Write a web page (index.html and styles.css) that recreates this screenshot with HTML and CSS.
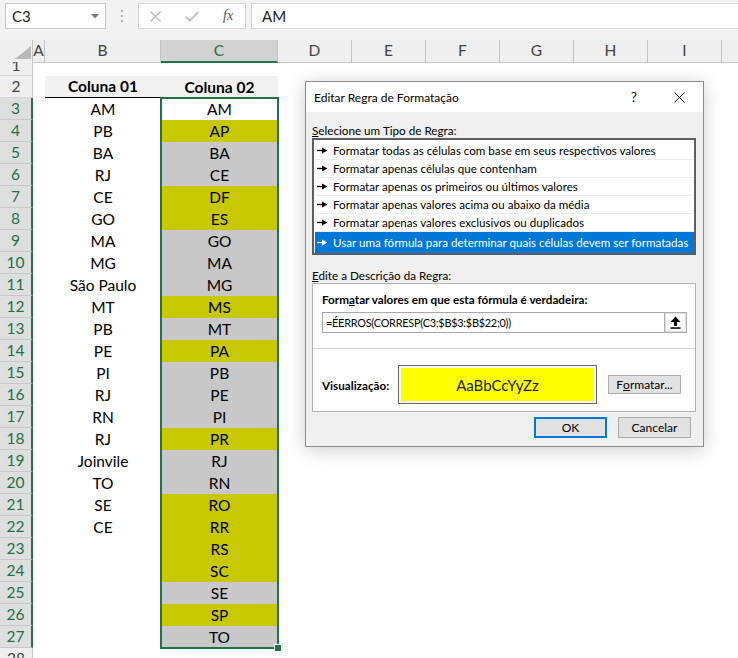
FILE: index.html
```html
<!DOCTYPE html>
<html lang="pt-BR">
<head>
<meta charset="utf-8">
<title>Editar Regra de Formatação</title>
<link rel="stylesheet" href="styles.css">
</head>
<body>
<div class="top">
  <div class="namebox"><span>C3</span><svg class="caret" width="8" height="5" viewBox="0 0 8 5"><polygon points="0,0 8,0 4,4.5" fill="#7a7a7a"/></svg></div>
  <div class="dots"><i></i><i></i><i></i></div>
  <div class="fxbox">
    <svg class="ic-x" width="11" height="11" viewBox="0 0 11 11"><path d="M0.5 0.5 L10.5 10.5 M10.5 0.5 L0.5 10.5" stroke="#b8b8b8" stroke-width="1.2" fill="none"/></svg>
    <svg class="ic-ok" width="14" height="11" viewBox="0 0 14 11"><path d="M0.8 5.6 L4.8 9.6 L13.2 1" stroke="#b8b8b8" stroke-width="1.6" fill="none"/></svg>
    <span class="fx">fx</span>
  </div>
  <div class="finput">AM</div>
</div>

<div class="sheet">
  <div class="hdr">
    <div class="corner"><svg width="33" height="22" viewBox="0 0 33 22"><polygon points="15,19 31,19 31,6" fill="#b9b9b9"/></svg></div>
    <div class="ch">A</div><div class="ch">B</div><div class="ch sel">C</div><div class="ch">D</div><div class="ch">E</div><div class="ch">F</div><div class="ch">G</div><div class="ch">H</div><div class="ch">I</div><div class="ch last"></div>
  </div>
  <div class="row r1"><div class="rh"><span>1</span></div></div>
  <div class="row"><div class="rh">2</div><div></div><div class="c hd bl">Coluna 01</div><div class="c hd">Coluna 02</div></div>
  <div class="row"><div class="rh s">3</div><div></div><div class="c">AM</div><div class="c">AM</div></div>
  <div class="row"><div class="rh s">4</div><div></div><div class="c">PB</div><div class="c y">AP</div></div>
  <div class="row"><div class="rh s">5</div><div></div><div class="c">BA</div><div class="c g">BA</div></div>
  <div class="row"><div class="rh s">6</div><div></div><div class="c">RJ</div><div class="c g">CE</div></div>
  <div class="row"><div class="rh s">7</div><div></div><div class="c">CE</div><div class="c y">DF</div></div>
  <div class="row"><div class="rh s">8</div><div></div><div class="c">GO</div><div class="c y">ES</div></div>
  <div class="row"><div class="rh s">9</div><div></div><div class="c">MA</div><div class="c g">GO</div></div>
  <div class="row"><div class="rh s">10</div><div></div><div class="c">MG</div><div class="c g">MA</div></div>
  <div class="row"><div class="rh s">11</div><div></div><div class="c">São Paulo</div><div class="c g">MG</div></div>
  <div class="row"><div class="rh s">12</div><div></div><div class="c">MT</div><div class="c y">MS</div></div>
  <div class="row"><div class="rh s">13</div><div></div><div class="c">PB</div><div class="c g">MT</div></div>
  <div class="row"><div class="rh s">14</div><div></div><div class="c">PE</div><div class="c y">PA</div></div>
  <div class="row"><div class="rh s">15</div><div></div><div class="c">PI</div><div class="c g">PB</div></div>
  <div class="row"><div class="rh s">16</div><div></div><div class="c">RJ</div><div class="c g">PE</div></div>
  <div class="row"><div class="rh s">17</div><div></div><div class="c">RN</div><div class="c g">PI</div></div>
  <div class="row"><div class="rh s">18</div><div></div><div class="c">RJ</div><div class="c y">PR</div></div>
  <div class="row"><div class="rh s">19</div><div></div><div class="c">Joinvile</div><div class="c g">RJ</div></div>
  <div class="row"><div class="rh s">20</div><div></div><div class="c">TO</div><div class="c g">RN</div></div>
  <div class="row"><div class="rh s">21</div><div></div><div class="c">SE</div><div class="c y">RO</div></div>
  <div class="row"><div class="rh s">22</div><div></div><div class="c">CE</div><div class="c y">RR</div></div>
  <div class="row"><div class="rh s">23</div><div></div><div class="c"></div><div class="c y">RS</div></div>
  <div class="row"><div class="rh s">24</div><div></div><div class="c"></div><div class="c y">SC</div></div>
  <div class="row"><div class="rh s">25</div><div></div><div class="c"></div><div class="c g">SE</div></div>
  <div class="row"><div class="rh s">26</div><div></div><div class="c"></div><div class="c y">SP</div></div>
  <div class="row"><div class="rh s">27</div><div></div><div class="c"></div><div class="c g">TO</div></div>
  <div class="row r28"><div class="rh">28</div><div></div><div class="c"></div><div class="c"></div></div>
</div>

<div class="selbox"><div class="handle"></div></div>

<div class="dialog">
  <div class="dtitle">
    <span class="dt-text">Editar Regra de Formatação</span>
    <span class="dq">?</span>
    <svg class="dx" width="11" height="11" viewBox="0 0 11 11"><path d="M0.5 0.5 L10.5 10.5 M10.5 0.5 L0.5 10.5" stroke="#111" stroke-width="1" fill="none"/></svg>
  </div>
  <div class="dbody">
    <div class="lbl"><u>S</u>elecione um Tipo de Regra:</div>
    <ul class="rules">
      <li><svg class="arr" width="11" height="7" viewBox="0 0 11 7"><path d="M0 3.5 H6" stroke="currentColor" stroke-width="1.3"/><polygon points="5,0.5 10.5,3.5 5,6.5" fill="currentColor"/></svg>Formatar todas as células com base em seus respectivos valores</li>
      <li><svg class="arr" width="11" height="7" viewBox="0 0 11 7"><path d="M0 3.5 H6" stroke="currentColor" stroke-width="1.3"/><polygon points="5,0.5 10.5,3.5 5,6.5" fill="currentColor"/></svg>Formatar apenas células que contenham</li>
      <li><svg class="arr" width="11" height="7" viewBox="0 0 11 7"><path d="M0 3.5 H6" stroke="currentColor" stroke-width="1.3"/><polygon points="5,0.5 10.5,3.5 5,6.5" fill="currentColor"/></svg>Formatar apenas os primeiros ou últimos valores</li>
      <li><svg class="arr" width="11" height="7" viewBox="0 0 11 7"><path d="M0 3.5 H6" stroke="currentColor" stroke-width="1.3"/><polygon points="5,0.5 10.5,3.5 5,6.5" fill="currentColor"/></svg>Formatar apenas valores acima ou abaixo da média</li>
      <li><svg class="arr" width="11" height="7" viewBox="0 0 11 7"><path d="M0 3.5 H6" stroke="currentColor" stroke-width="1.3"/><polygon points="5,0.5 10.5,3.5 5,6.5" fill="currentColor"/></svg>Formatar apenas valores exclusivos ou duplicados</li>
      <li class="on"><svg class="arr" width="11" height="7" viewBox="0 0 11 7"><path d="M0 3.5 H6" stroke="currentColor" stroke-width="1.3"/><polygon points="5,0.5 10.5,3.5 5,6.5" fill="currentColor"/></svg>Usar uma fórmula para determinar quais células devem ser formatadas</li>
    </ul>
    <div class="lbl lbl2"><u>E</u>dite a Descrição da Regra:</div>
    <div class="desc">
      <div class="blbl">Form<u>a</u>tar valores em que esta fórmula é verdadeira:</div>
      <div class="fin">
        <span class="ftext">=ÉERROS(CORRESP(C3;$B$3:$B$22;0))</span>
        <span class="fbtn"><svg width="11" height="13" viewBox="0 0 11 13"><polygon points="5.5,0.5 10.5,6 7,6 7,10 4,10 4,6 0.5,6" fill="#000"/><rect x="0.5" y="11.3" width="10" height="1.5" fill="#000"/></svg></span>
      </div>
      <div class="sep"></div>
      <div class="prow">
        <span class="plbl">Visualização:</span>
        <div class="pbox"><div class="pin">AaBbCcYyZz</div></div>
        <span class="btn fmt">F<u>o</u>rmatar...</span>
      </div>
    </div>
    <div class="actions">
      <span class="btn ok">OK</span>
      <span class="btn">Cancelar</span>
    </div>
  </div>
</div>
</body>
</html>
```

FILE: styles.css
```css
* { box-sizing: border-box; }
html, body { margin: 0; padding: 0; }
body {
  width: 738px;
  height: 658px;
  overflow: hidden;
  position: relative;
  background: #fff;
  font-family: Lato, "Liberation Sans", sans-serif;
  color: #000;
}

/* formula bar */
.top {
  height: 40px;
  background: #f3f3f3;
  display: flex;
  align-items: flex-start;
  padding-top: 3px;
}
.namebox {
  margin-left: 5px;
  width: 101px;
  height: 26px;
  background: #fff;
  border: 1px solid #c8c8c8;
  display: flex;
  align-items: center;
  justify-content: space-between;
  padding: 0 6px 0 6px;
  font-size: 15px;
  color: #222;
}
.caret { margin-top: 1px; }
.dots {
  width: 32px;
  height: 26px;
  display: flex;
  flex-direction: column;
  align-items: center;
  justify-content: center;
  gap: 3px;
}
.dots i { display: block; width: 2px; height: 2px; background: #b0b0b0; }
.fxbox {
  width: 108px;
  height: 26px;
  background: #fff;
  border: 1px solid #d6d6d6;
  display: flex;
  align-items: center;
  padding-left: 11px;
}
.ic-ok { margin-left: 24px; }
.fx {
  margin-left: 24px;
  font-family: "Liberation Serif", serif;
  font-style: italic;
  font-size: 14px;
  color: #555;
}
.finput {
  margin-left: 5px;
  flex: 1;
  height: 26px;
  background: #fff;
  border: 1px solid #d6d6d6;
  border-right: none;
  padding-left: 10px;
  font-size: 15px;
  display: flex;
  align-items: center;
  color: #222;
}

/* sheet */
.hdr {
  display: grid;
  grid-template-columns: 33px 12px 116px 117px repeat(6, 74px) 1fr;
  height: 22px;
  background: #efefef;
}
.corner { border-bottom: 1px solid #c6c6c6; border-right: 1px solid #c6c6c6; }
.corner svg { display: block; }
.ch {
  border-right: 1px solid #c4c4c4;
  border-bottom: 1px solid #c6c6c6;
  text-align: center;
  line-height: 21px;
  font-size: 15.5px;
  color: #444;
}
.ch.last { border-right: none; }
.ch.sel {
  background: #d2d2d2;
  color: #217346;
  border-bottom: 2px solid #217346;
}
.row {
  display: grid;
  grid-template-columns: 33px 12px 116px 117px 1fr;
  height: 22px;
}
.rh {
  background: #efefef;
  border-right: 1px solid #c6c6c6;
  border-bottom: 1px solid #d6d6d6;
  text-align: center;
  line-height: 21px;
  font-size: 15.5px;
  color: #444;
  overflow: hidden;
}
.rh.s {
  background: #dedede;
  color: #217346;
  border-right: 2px solid #217346;
  border-bottom-color: #c9c9c9;
}
.r1 { height: 14px; overflow: hidden; }
.r1 .rh span { display: block; margin-top: -7px; }
.r28 .rh { line-height: 20px; }
.c {
  text-align: center;
  line-height: 22px;
  font-size: 15.5px;
  white-space: nowrap;
}
.c.hd { background: #f2f2f2; font-weight: bold; }
.c.bl { border-bottom: 1px solid #000; line-height: 21px; }
.c.y { background: #c8c800; }
.c.g { background: #c8c8c8; }

.selbox {
  position: absolute;
  left: 160px;
  top: 97px;
  width: 119px;
  height: 552px;
  border: 2px solid #217346;
}
.handle {
  position: absolute;
  right: -4px;
  bottom: -4px;
  width: 6px;
  height: 6px;
  background: #217346;
  outline: 1px solid #fff;
}

/* dialog */
.dialog {
  position: absolute;
  left: 305px;
  top: 81px;
  width: 399px;
  height: 366px;
  border: 1px solid #8c8c8c;
  background: #f0f0f0;
  box-shadow: 0 3px 18px rgba(0, 0, 0, 0.2);
  font-size: 11.7px;
  display: flex;
  flex-direction: column;
}
.dtitle {
  height: 30px;
  background: #fff;
  display: flex;
  align-items: center;
  padding-left: 8px;
  padding-right: 18px;
  font-size: 12px;
}
.dt-text { flex: 1; }
.dq { width: 10px; text-align: center; margin-right: 35px; font-size: 13px; }
.dbody {
  flex: 1;
  padding: 10px 7px 0 6px;
}
.lbl { line-height: 16px; }
.lbl2 { margin-top: 12px; }
.rules {
  list-style: none;
  margin: 0;
  padding: 2px 0 1px 1px;
  border: 2px solid #5e5e5e;
  background: #fff;
  height: 117px;
  font-size: 11.6px;
}
.rules li {
  height: 18px;
  line-height: 18px;
  padding-left: 2px;
  display: flex;
  align-items: center;
  white-space: nowrap;
  border-bottom: 1px solid #ededed;
  color: #000;
}
.rules li .arr { margin-right: 5px; flex: none; }
.rules li.on {
  height: 21px;
  background: #0078d7;
  color: #fff;
  border-bottom: none;
}
.desc {
  background: #fff;
  border: 1px solid #b4b4b4;
  height: 129px;
  padding: 7px 8px 0 9px;
}
.blbl { font-weight: bold; line-height: 16px; }
.fin {
  margin-top: 5px;
  height: 21px;
  border: 1px solid #a8a8a8;
  display: flex;
  align-items: center;
  justify-content: space-between;
  padding-left: 3px;
}
.ftext { font-size: 10.9px; letter-spacing: -0.25px; }
.fbtn {
  width: 23px;
  height: 21px;
  margin-right: -1px;
  border: 1px solid #adadad;
  box-shadow: inset 0 0 0 1px #e0e0e0;
  background: #fbfbfb;
  display: flex;
  align-items: center;
  justify-content: center;
}
.sep {
  margin: 15px -8px 0 -9px;
  border-top: 1px solid #d9d9d9;
}
.prow {
  margin-top: 16px;
  display: flex;
  align-items: center;
}
.plbl { width: 76px; font-weight: bold; }
.pbox {
  width: 199px;
  height: 39px;
  border: 1px solid #6a6a6a;
  padding: 2px;
  background: #f4f4f4;
}
.pin {
  height: 100%;
  background: #ffff00;
  display: flex;
  align-items: center;
  justify-content: center;
  font-size: 15px;
  color: #222;
}
.btn {
  display: flex;
  align-items: center;
  justify-content: center;
  width: 73px;
  height: 21px;
  background: #e1e1e1;
  border: 1px solid #adadad;
  font-size: 12px;
}
.btn.fmt { height: 19px; margin-left: 11px; }
.actions {
  margin-top: 5px;
  display: flex;
  justify-content: flex-end;
  gap: 11px;
  padding-right: 5px;
}
.btn.ok { border: 2px solid #0078d7; }
```
